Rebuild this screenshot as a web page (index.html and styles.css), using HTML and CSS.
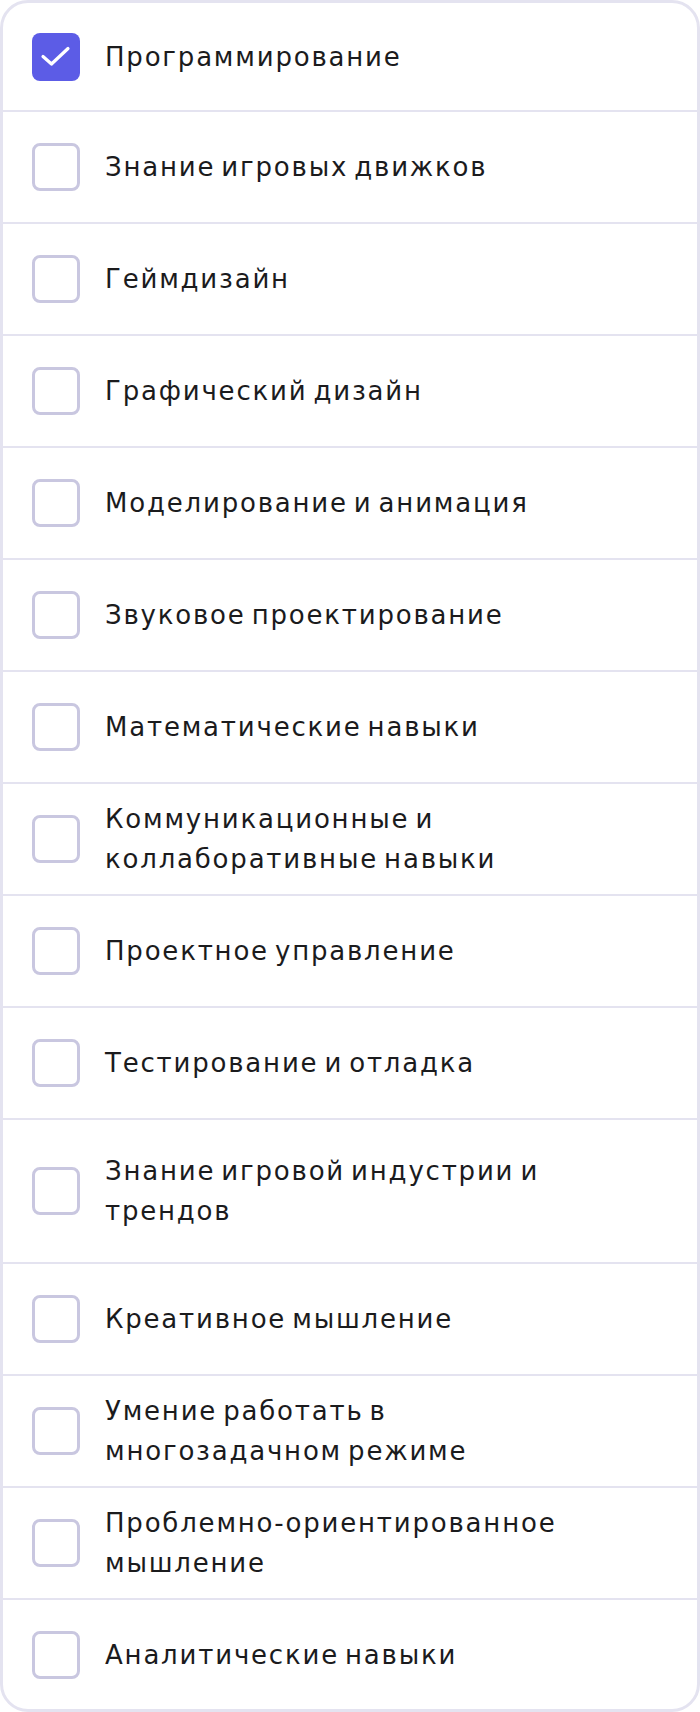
FILE: index.html
```html
<!DOCTYPE html>
<html lang="ru">
<head>
    <meta charset="UTF-8">
    <meta name="viewport" content="width=device-width, initial-scale=1.0">
    <title>Навыки</title>
    <link rel="stylesheet" href="styles.css">
</head>
<body>
    <div class="skills">
        <label class="skill">
            <span class="box checked">
                <svg viewBox="0 0 48 48" width="48" height="48">
                    <path d="M11 23.5 L19.5 31 L36 15.5" fill="none" stroke="#fff" stroke-width="3.2" stroke-linecap="round" stroke-linejoin="round"/>
                </svg>
            </span>
            <span class="name">Программирование</span>
        </label>
        <label class="skill">
            <span class="box"></span>
            <span class="name">Знание игровых движков</span>
        </label>
        <label class="skill">
            <span class="box"></span>
            <span class="name">Геймдизайн</span>
        </label>
        <label class="skill">
            <span class="box"></span>
            <span class="name">Графический дизайн</span>
        </label>
        <label class="skill">
            <span class="box"></span>
            <span class="name">Моделирование и анимация</span>
        </label>
        <label class="skill">
            <span class="box"></span>
            <span class="name">Звуковое проектирование</span>
        </label>
        <label class="skill">
            <span class="box"></span>
            <span class="name">Математические навыки</span>
        </label>
        <label class="skill">
            <span class="box"></span>
            <span class="name">Коммуникационные и<br>коллаборативные навыки</span>
        </label>
        <label class="skill">
            <span class="box"></span>
            <span class="name">Проектное управление</span>
        </label>
        <label class="skill">
            <span class="box"></span>
            <span class="name">Тестирование и отладка</span>
        </label>
        <label class="skill tall">
            <span class="box"></span>
            <span class="name">Знание игровой индустрии и<br>трендов</span>
        </label>
        <label class="skill">
            <span class="box"></span>
            <span class="name">Креативное мышление</span>
        </label>
        <label class="skill">
            <span class="box"></span>
            <span class="name">Умение работать в<br>многозадачном режиме</span>
        </label>
        <label class="skill">
            <span class="box"></span>
            <span class="name">Проблемно-ориентированное<br>мышление</span>
        </label>
        <label class="skill">
            <span class="box"></span>
            <span class="name">Аналитические навыки</span>
        </label>
    </div>
</body>
</html>
```

FILE: styles.css
```css
body {
    margin: 0;
    background: #fff;
    font-family: "DejaVu Sans", "Noto Sans", sans-serif;
    color: #1b1b1d;
}

.skills {
    width: 700px;
    height: 1712px;
    box-sizing: border-box;
    border: 3px solid #e4e3f0;
    border-radius: 28px;
    background: #fff;
    display: flex;
    flex-direction: column;
    overflow: hidden;
}

.skill {
    display: flex;
    align-items: center;
    gap: 25px;
    min-height: 110px;
    padding-left: 29px;
    border-bottom: 2px solid #e4e3f0;
    cursor: pointer;
}

.skill:first-child {
    min-height: 107px;
}

.skill:last-child {
    border-bottom: none;
    flex: 1;
}

.skill.tall {
    min-height: 142px;
}

.box {
    flex: none;
    width: 48px;
    height: 48px;
    box-sizing: border-box;
    border: 3px solid #c9c7e0;
    border-radius: 8px;
    background: #fff;
}

.box.checked {
    border: none;
    background: #5c5ce6;
}

.box svg {
    display: block;
}

.name {
    font-size: 26px;
    line-height: 40px;
    letter-spacing: 1.8px;
    word-spacing: -4px;
}
```
